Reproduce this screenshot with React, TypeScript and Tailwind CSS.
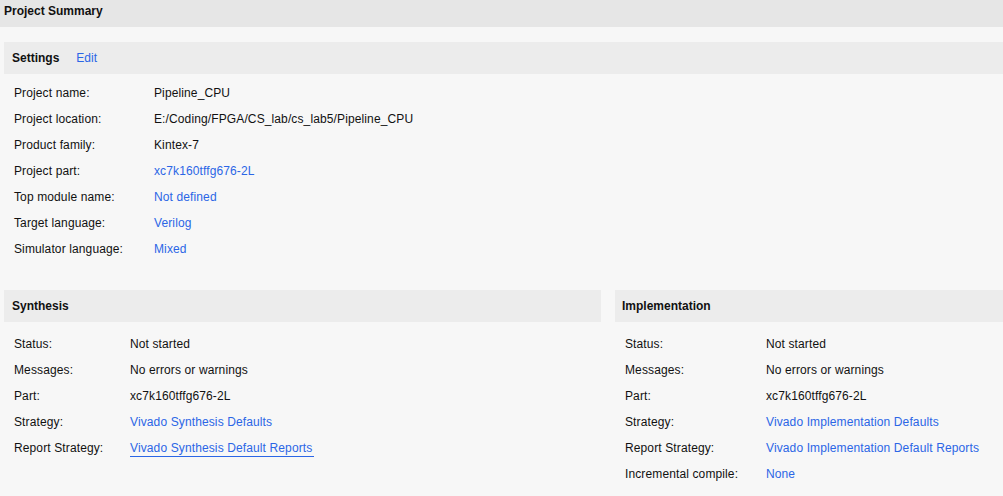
import React from "react";

const LINK = "text-[#2b66e6]";

type Row = { label: string; value: string; link?: boolean; underline?: boolean };

function Rows({ rows, labelW }: { rows: Row[]; labelW: string }) {
  return (
    <div className="flex flex-col pl-[10px] tracking-[0.12px]">
      {rows.map((r) => (
        <div key={r.label} className="flex h-[26px] items-center pt-[2px]">
          <div className={`${labelW} shrink-0 text-[#111]`}>{r.label}</div>
          <div className={r.link ? LINK : "text-[#111]"}>
            {r.underline ? (
              <span className="border-b border-[#2b66e6] pb-[1px] pr-[2px]">{r.value}</span>
            ) : (
              r.value
            )}
          </div>
        </div>
      ))}
    </div>
  );
}

export default function App() {
  const settings: Row[] = [
    { label: "Project name:", value: "Pipeline_CPU" },
    { label: "Project location:", value: "E:/Coding/FPGA/CS_lab/cs_lab5/Pipeline_CPU" },
    { label: "Product family:", value: "Kintex-7" },
    { label: "Project part:", value: "xc7k160tffg676-2L", link: true },
    { label: "Top module name:", value: "Not defined", link: true },
    { label: "Target language:", value: "Verilog", link: true },
    { label: "Simulator language:", value: "Mixed", link: true },
  ];
  const synth: Row[] = [
    { label: "Status:", value: "Not started" },
    { label: "Messages:", value: "No errors or warnings" },
    { label: "Part:", value: "xc7k160tffg676-2L" },
    { label: "Strategy:", value: "Vivado Synthesis Defaults", link: true },
    { label: "Report Strategy:", value: "Vivado Synthesis Default Reports", link: true, underline: true },
  ];
  const impl: Row[] = [
    { label: "Status:", value: "Not started" },
    { label: "Messages:", value: "No errors or warnings" },
    { label: "Part:", value: "xc7k160tffg676-2L" },
    { label: "Strategy:", value: "Vivado Implementation Defaults", link: true },
    { label: "Report Strategy:", value: "Vivado Implementation Default Reports", link: true },
    { label: "Incremental compile:", value: "None", link: true },
  ];
  return (
    <div
      className="min-h-screen w-[1003px] bg-[#f7f7f7] text-[12px] leading-[14px]"
      style={{ fontFamily: '"Liberation Sans", Arial, sans-serif' }}
    >
      <div className="flex h-[27px] items-start bg-[#e6e6e6] pl-[4px] pt-[4px] font-bold text-[#111]">
        Project Summary
      </div>
      <div className="pl-[4px] pt-[15px]">
        <div className="flex h-[32px] items-center bg-[#ececec] pl-[8px]">
          <span className="font-bold text-[#111]">Settings</span>
          <span className={`ml-[17px] ${LINK}`}>Edit</span>
        </div>
        <div className="pt-[5px]">
          <Rows rows={settings} labelW="w-[140px]" />
        </div>
        <div className="mt-[29px] flex gap-[14px]">
          <div className="w-[597px]">
            <div className="flex h-[32px] items-center bg-[#ececec] pl-[8px] font-bold text-[#111]">Synthesis</div>
            <div className="pt-[8px]">
              <Rows rows={synth} labelW="w-[116px]" />
            </div>
          </div>
          <div className="flex-1">
            <div className="flex h-[32px] items-center bg-[#ececec] pl-[7px] font-bold text-[#111]">Implementation</div>
            <div className="pt-[8px]">
              <Rows rows={impl} labelW="w-[141px]" />
            </div>
          </div>
        </div>
      </div>
    </div>
  );
}
